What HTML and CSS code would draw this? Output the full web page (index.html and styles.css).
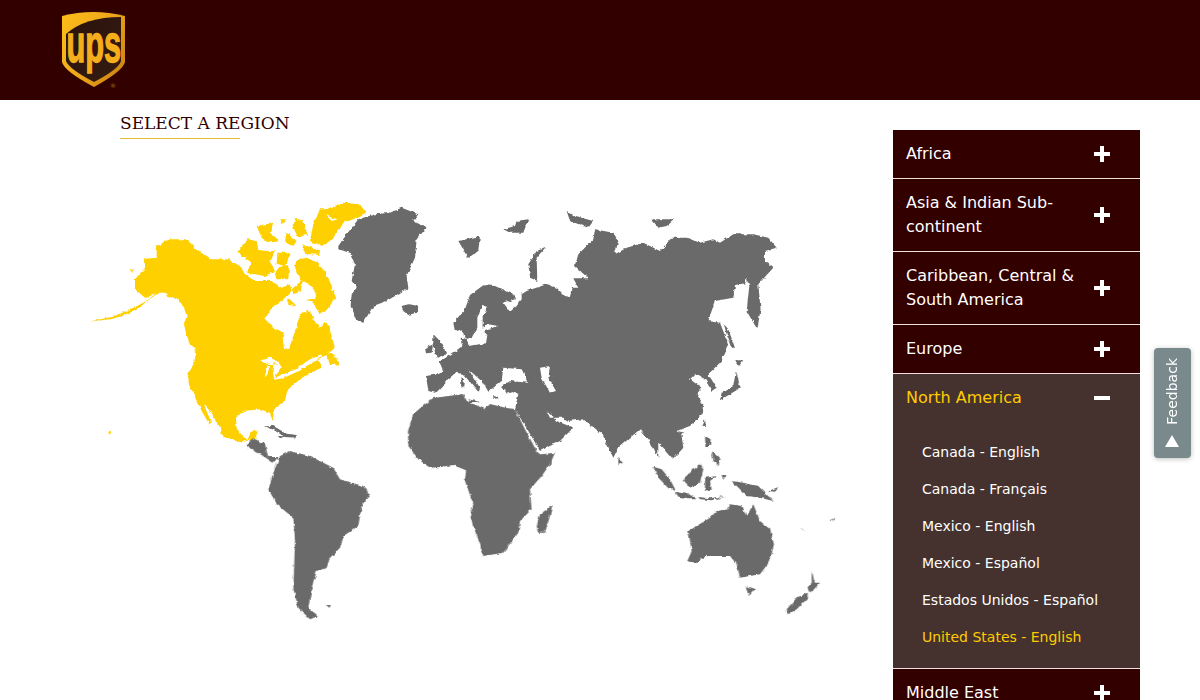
FILE: index.html
```html
<!DOCTYPE html>
<html lang="en">
<head>
<meta charset="utf-8">
<title>UPS - Select a region</title>
<link rel="stylesheet" href="styles.css">
</head>
<body>
<header class="topbar">
  <svg class="logo" viewBox="0 0 64 78" aria-label="UPS">
    <defs>
      <linearGradient id="gold" x1="0" y1="0" x2="1" y2="0.6">
        <stop offset="0" stop-color="#fdbf1a"/><stop offset="0.55" stop-color="#f0a81a"/><stop offset="1" stop-color="#d18a14"/>
      </linearGradient>
      <linearGradient id="dark" x1="0" y1="0" x2="1" y2="1">
        <stop offset="0" stop-color="#2a120c"/><stop offset="1" stop-color="#351c12"/>
      </linearGradient>
    </defs>
    <path d="M1 5 Q32 -3 64 5 L64 51 Q62 60 33 76 Q3 60 1 51Z" fill="url(#gold)"/>
    <path d="M5 23 Q24 6 60 6 L60 50 Q58 58 33 71 Q8 58 5 50Z" fill="url(#dark)"/>
    <text class="logo-text" transform="translate(5.5 51) scale(.57 1)">ups</text>
    <text class="logo-reg" x="49" y="77">®</text>
  </svg>
</header>
<main class="page">
  <section class="map-col">
    <h1 class="title">SELECT A REGION</h1>
    <svg class="map" viewBox="80 190 760 440" aria-label="World map">
      <defs>
        <filter id="rough" filterUnits="userSpaceOnUse" x="80" y="190" width="760" height="440">
          <feTurbulence type="fractalNoise" baseFrequency="0.22" numOctaves="2" seed="4" result="n"/>
          <feDisplacementMap in="SourceGraphic" in2="n" scale="3.5" xChannelSelector="R" yChannelSelector="G"/>
          <feGaussianBlur stdDeviation="0.3"/>
        </filter>
      </defs>
      <g filter="url(#rough)">
      <g class="na" transform="translate(80 190) scale(.3333)">
        <path fill-rule="evenodd" d="M30 392L95 384 125 376 170 356 205 328 235 305 255 305 262 318 290 322 310 345 320 375 312 400 318 425 325 450 350 485 340 520 325 550 322 572 340 605 352 630 365 660 388 700 394 695 372 640 395 665 410 695 425 715 420 730 445 745 490 755 505 742 512 722 535 718 525 745 508 748 490 738 470 712 468 680 490 660 540 655 570 665 578 690 583 655 600 640 615 630 622 598 660 565 690 545 725 530 712 505 740 492 765 470 745 400 735 392 720 410 700 385 690 362 668 360 655 385 650 410 640 435 628 470 612 475 608 440 612 425 580 412 556 385 575 350 600 335 625 310 635 300 630 280 605 290 575 270 555 270 525 270 495 250 480 225 445 205 390 205 345 170 320 145 270 145 230 165 230 200 195 205 195 230 165 265 165 295 195 320 225 310 200 330 165 348 125 366 95 377ZM540 510L575 495 600 520 570 522 ZM560 522L570 526 560 558 555 555ZM580 515L606 525 592 545 585 562 620 546 650 533 690 505 725 493 728 500 695 516 655 540 610 562 583 566 578 540Z"/>
        <path d="M738 490L760 484 776 520 750 522 745 505Z"/>
        <path d="M735 55L790 35 840 40 858 65 820 85 790 95 775 122 750 150 725 165 690 150 700 100 720 55ZM735 70L755 90 775 85 755 80Z" fill-rule="evenodd"/>
        <path d="M645 80L670 90 682 130 655 140 640 110Z"/>
        <path d="M665 160L720 178 718 192 675 188Z"/>
        <path d="M530 105L580 95 570 125 600 150 565 155 545 140Z"/>
        <path d="M620 125L650 150 640 165 615 150Z"/>
        <path d="M598 85L620 85 605 100Z"/>
        <path d="M475 180L505 145 530 150 535 175 500 195 485 195Z"/>
        <path d="M495 200L520 175 560 180 585 180 570 215 585 240 555 255 525 250 498 245 515 215Z"/>
        <path d="M592 185L632 185 615 225 590 218Z"/>
        <path d="M600 225L628 222 625 265 590 265 582 250Z"/>
        <path d="M645 225L650 205 680 200 715 215 745 260 768 320 742 355 720 370 695 330 675 328 710 320 700 290 670 270 650 250Z"/>
        <path d="M635 295L670 265 662 300 640 306Z"/>
        <path d="M625 320L650 345 625 342Z"/>
        <path d="M190 205L220 202 225 210 200 232Z"/>
        <circle cx="90" cy="724" r="4"/>
        <path d="M147 232L160 240 155 243Z"/>
      </g>
      <g class="land" transform="translate(80 190) scale(.3333)">
        <path d="M775 165L800 130 835 85 885 70 930 65 965 50 1015 70 1000 90 1040 110 1010 145 1005 200 980 255 985 290 920 330 880 345 850 395 830 390 812 345 815 310 830 290 815 270 825 220 810 185 775 175Z"/>
        <path d="M965 345L985 340 1018 345 1010 365 985 372 970 360Z"/>
        <path d="M555 706L580 705 620 728 650 732 650 740 615 738 580 716Z"/>
        <path d="M594 735L618 736 600 742Z"/>
      </g>
      <g class="land" transform="translate(400 190) scale(.3333)">
        <path fill-rule="evenodd" d="M78 555L115 550 130 540 118 512 150 492 180 470 188 462 185 440 200 442 205 465 258 457 262 432 250 420 292 405 262 400 248 410 248 375 262 347 245 345 232 380 232 410 215 440 195 445 185 415 165 422 160 395 195 355 210 312 250 283 285 285 340 310 345 325 310 335 330 362 350 345 365 325 365 310 380 300 440 280 470 290 495 315 510 318 515 290 535 290 520 262 565 262 525 225 535 190 580 145 585 115 640 125 655 150 645 190 680 170 730 155 780 180 815 140 860 140 900 155 940 145 960 155 1000 130 1060 130 1105 140 1130 170 1095 180 1095 210 1120 230 1075 280 1082 355 1072 415 1040 360 1048 285 1040 260 1035 280 1005 285 1000 320 945 330 925 390 960 395 985 460 965 510 925 550 950 590 935 600 918 570 905 555 885 550 870 565 905 590 890 610 910 640 905 670 870 705 830 720 845 735 850 770 820 805 790 770 775 755 775 800 755 760 720 715 655 770 640 800 605 725 595 720 550 685 505 690 490 680 450 680 440 660 470 690 520 710 480 750 420 780 385 720 345 655 355 610 300 590 330 570 385 575 365 535 310 530 305 570 280 590 265 602 250 575 205 535 240 590 235 602 190 550 170 545 135 575 105 605 85 600ZM420 530L450 525 445 560 468 600 450 605 425 560Z"/>
        <path d="M100 430L120 450 140 490 110 500 100 465Z"/>
        <path d="M75 470L100 460 95 485 78 487Z"/>
        <path d="M175 150L240 135 235 180 205 200Z"/>
        <path d="M310 115L345 105 350 90 385 85 370 125 330 125Z"/>
        <path d="M435 170L410 200 412 270 390 260 385 220 410 180Z"/>
        <path d="M500 60L525 75 580 90 565 110 510 90Z"/>
        <path d="M755 85L790 85 825 85 800 105 775 110Z"/>
        <path d="M972 400L985 415 1005 470 995 470 980 430Z"/>
        <path d="M1005 508L1030 508 1015 528Z"/>
        <path d="M1008 540L1022 590 960 628 965 605 1000 585Z"/>
        <path d="M185 560L192 565 190 590 183 585Z"/>
        <path d="M205 625L240 632 210 634Z"/>
        <path d="M280 615L305 620 280 624Z"/>
        <path d="M315 598L345 600 320 608Z"/>
        <path d="M915 685L918 705 908 705Z"/>
      </g>
      <g class="land" transform="translate(230 400) scale(.3333)">
        <path d="M534 90L549 39 609 -9 699 -21 711 0 765 24 780 9 831 21 855 24 885 85 920 150 930 160 975 155 960 190 935 225 900 265 905 325 870 360 865 395 820 455 760 465 750 430 735 390 720 345 730 310 705 240 708 208 670 192 630 198 600 200 565 175 535 135Z"/>
        <path d="M150 165L180 150 240 165 310 200 330 235 400 255 420 280 395 315 385 375 340 405 330 440 300 470 290 500 260 510 245 560 235 620 265 645 240 655 205 620 190 565 195 420 190 350 140 310 115 265 130 215Z"/>
        <path d="M50 130L70 112 105 130 115 168 145 168 130 185 95 162 60 142Z"/>
        <path d="M925 395L920 375 930 340 968 312 960 345 945 395Z"/>
        <path d="M288 612L303 612 298 620Z"/>
      </g>
      <g class="land" transform="translate(600 400) scale(.3333)">
        <path d="M265 390L330 350 350 330 385 325 390 310 425 315 440 345 460 310 480 360 510 385 522 430 510 480 480 520 420 530 410 490 390 465 320 465 285 485 262 480 275 450Z"/>
        <path d="M437 555L465 565 447 585Z"/>
        <path d="M635 510L645 545 660 545 630 578 622 560 635 545Z"/>
        <path d="M620 575L625 590 590 625 565 640 560 625 590 590Z"/>
        <path d="M395 240L430 245 475 255 520 300 480 290 440 285 410 255Z"/>
        <path d="M505 270L535 258 525 272Z"/>
        <path d="M300 190L310 205 300 245 270 260 248 235 270 215Z"/>
        <path d="M160 197L185 205 210 235 228 270 205 262 170 225Z"/>
        <path d="M225 272L265 280 292 292 265 292 235 287Z"/>
        <path d="M295 288L330 292 375 285 335 298 300 295Z"/>
        <path d="M315 230L350 225 330 240 335 265 315 270Z"/>
        <path d="M315 105L332 115 330 135 316 135Z"/>
        <path d="M335 150L362 175 355 192 340 180Z"/>
        <path d="M365 222L376 222 370 238Z"/>
        <path d="M55 170L68 185 55 192Z"/>
        <path d="M235 90L250 95 240 105Z"/>
        <path d="M600 380L618 392 605 385Z"/>
        <path d="M690 358L708 348 695 362Z"/>
        <path d="M350 292L365 292 350 298Z"/>
      </g>
      </g>
    </svg>
  </section>
  <nav class="regions">
    <div class="region"><span class="region-name">Africa</span><span class="sign plus"></span></div>
    <div class="region"><span class="region-name">Asia &amp; Indian Sub-continent</span><span class="sign plus"></span></div>
    <div class="region"><span class="region-name">Caribbean, Central &amp; South America</span><span class="sign plus"></span></div>
    <div class="region"><span class="region-name">Europe</span><span class="sign plus"></span></div>
    <div class="region-open">
      <div class="region region-active"><span class="region-name">North America</span><span class="sign"></span></div>
      <ul class="locales">
        <li>Canada - English</li>
        <li>Canada - Français</li>
        <li>Mexico - English</li>
        <li>Mexico - Español</li>
        <li>Estados Unidos - Español</li>
        <li class="locale-current">United States - English</li>
      </ul>
    </div>
    <div class="region"><span class="region-name">Middle East</span><span class="sign plus"></span></div>
  </nav>
</main>
<aside class="feedback"><span class="feedback-text">Feedback</span><span class="feedback-arrow"></span></aside>
</body>
</html>
```
FILE: styles.css
```css
html, body { margin: 0; height: 700px; overflow: hidden; background: #fff; }
body { font-family: "DejaVu Sans", sans-serif; }
.topbar { height: 100px; background: #300; padding: 11px 0 0 61px; box-sizing: border-box; }
.logo { display: block; width: 64px; height: 78px; }
.logo-text { font-family: "Liberation Sans", sans-serif; font-weight: 700; font-size: 54px; fill: #f5ae1b; stroke: #f5ae1b; stroke-width: 1.4px; }
.logo-reg { font-family: "DejaVu Sans", sans-serif; font-size: 6px; fill: #a8701c; }
.page { display: flex; }
.map-col { width: 813px; padding-left: 80px; }
.title { margin: 12px 0 0 40px; width: 175px; font: 400 17px/23px "DejaVu Serif", serif; color: #300; white-space: nowrap; }
.title::after { content: ""; display: block; width: 120px; height: 1px; margin-top: 3px; background: #e6b93a; }
.map { display: block; width: 760px; height: 440px; margin-top: 52px; }
.na { fill: #ffd000; }
.land { fill: #6b6b6b; }
.regions { width: 247px; margin-top: 30px; }
.region { display: flex; align-items: center; background: #300; color: #fff; font-size: 16px; line-height: 24px; padding: 12px 30px 12px 13px; border-bottom: 1px solid #f0dfdc; }
.region-name { flex: 1; padding-right: 16px; }
.sign { position: relative; flex: none; width: 16px; height: 4px; background: #fff; }
.plus::after { content: ""; position: absolute; left: 6px; top: -6px; width: 4px; height: 16px; background: #fff; }
.region-open { background: #45322e; border-bottom: 1px solid #f0dfdc; }
.region-active { background: none; border-bottom: 0; color: #fc0; }
.locales { list-style: none; margin: 0; padding: 12px 0 12px 29px; color: #fff; font-size: 14px; line-height: 37px; }
.locale-current { color: #fc0; }
.feedback { position: fixed; left: 1154px; top: 348px; width: 37px; height: 110px; box-sizing: border-box; display: flex; flex-direction: column; align-items: center; padding-top: 10px; background: #7a8a8c; border-radius: 4px; box-shadow: 0 1px 5px rgba(0,0,0,.25); color: #fff; font-size: 14px; }
.feedback-text { writing-mode: vertical-rl; transform: rotate(180deg); line-height: 17px; }
.feedback-arrow { margin: 10px 1px 0 0; width: 0; height: 0; border-left: 7px solid transparent; border-right: 7px solid transparent; border-bottom: 12px solid #fff; }
```
